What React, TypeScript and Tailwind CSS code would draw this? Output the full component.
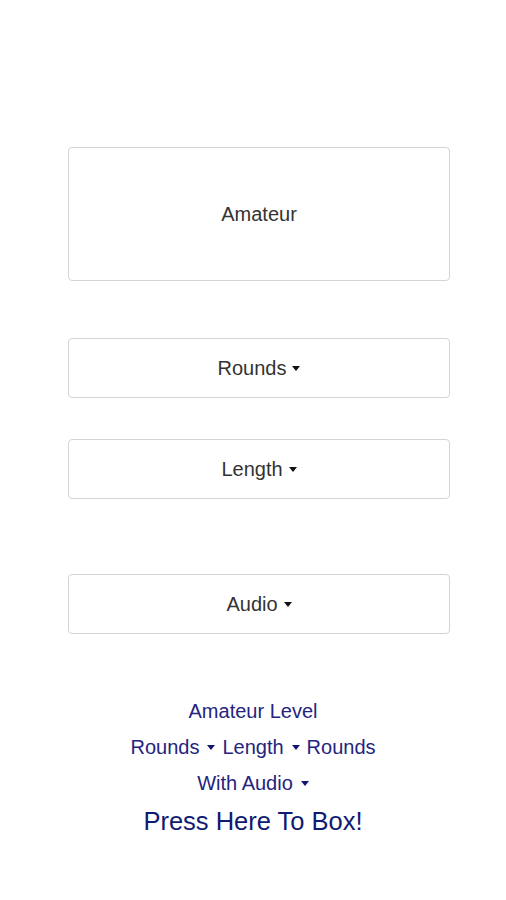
import React from 'react';

const Caret: React.FC<{ className?: string }> = ({ className }) => (
  <span
    className={`inline-block align-middle w-0 h-0 border-l-[4px] border-r-[4px] border-t-[5px] border-l-transparent border-r-transparent ${className ?? 'ml-[6px] border-t-[#111111]'}`}
  />
);

const SelectBox: React.FC<{ label: string; className?: string }> = ({ label, className }) => (
  <button
    type="button"
    className={`ml-[68px] w-[382px] h-[60px] flex items-center justify-center bg-white border border-[#d4d4d4] rounded-[4px] text-[20px] text-[#333333] ${className ?? ''}`}
  >
    <span>{label}</span>
    <Caret />
  </button>
);

const App: React.FC = () => {
  return (
    <div className="min-h-[900px] w-[506px] bg-white pt-[147px] font-['Liberation_Sans',Arial,sans-serif]">
      <div className="ml-[68px] w-[382px] h-[134px] flex items-center justify-center border border-[#d4d4d4] rounded-[4px] text-[20px] text-[#333333]">
        Amateur
      </div>

      <SelectBox label="Rounds" className="mt-[57px]" />
      <SelectBox label="Length" className="mt-[41px]" />
      <SelectBox label="Audio" className="mt-[75px]" />

      <div className="mt-[59px] flex flex-col items-center text-[20px] leading-[36px] text-[#24247e]">
        <div>Amateur Level</div>
        <div className="flex items-center">
          <span>Rounds</span>
          <Caret className="ml-[8px] border-t-[#14146e]" />
          <span className="ml-[7px]">Length</span>
          <Caret className="ml-[8px] border-t-[#14146e]" />
          <span className="ml-[7px]">Rounds</span>
        </div>
        <div className="flex items-center">
          <span>With Audio</span>
          <Caret className="ml-[8px] border-t-[#14146e]" />
        </div>
        <button type="button" className="text-[25.5px] leading-[40px] text-[#0f1a72]">
          Press Here To Box!
        </button>
      </div>
    </div>
  );
};

export default App;
